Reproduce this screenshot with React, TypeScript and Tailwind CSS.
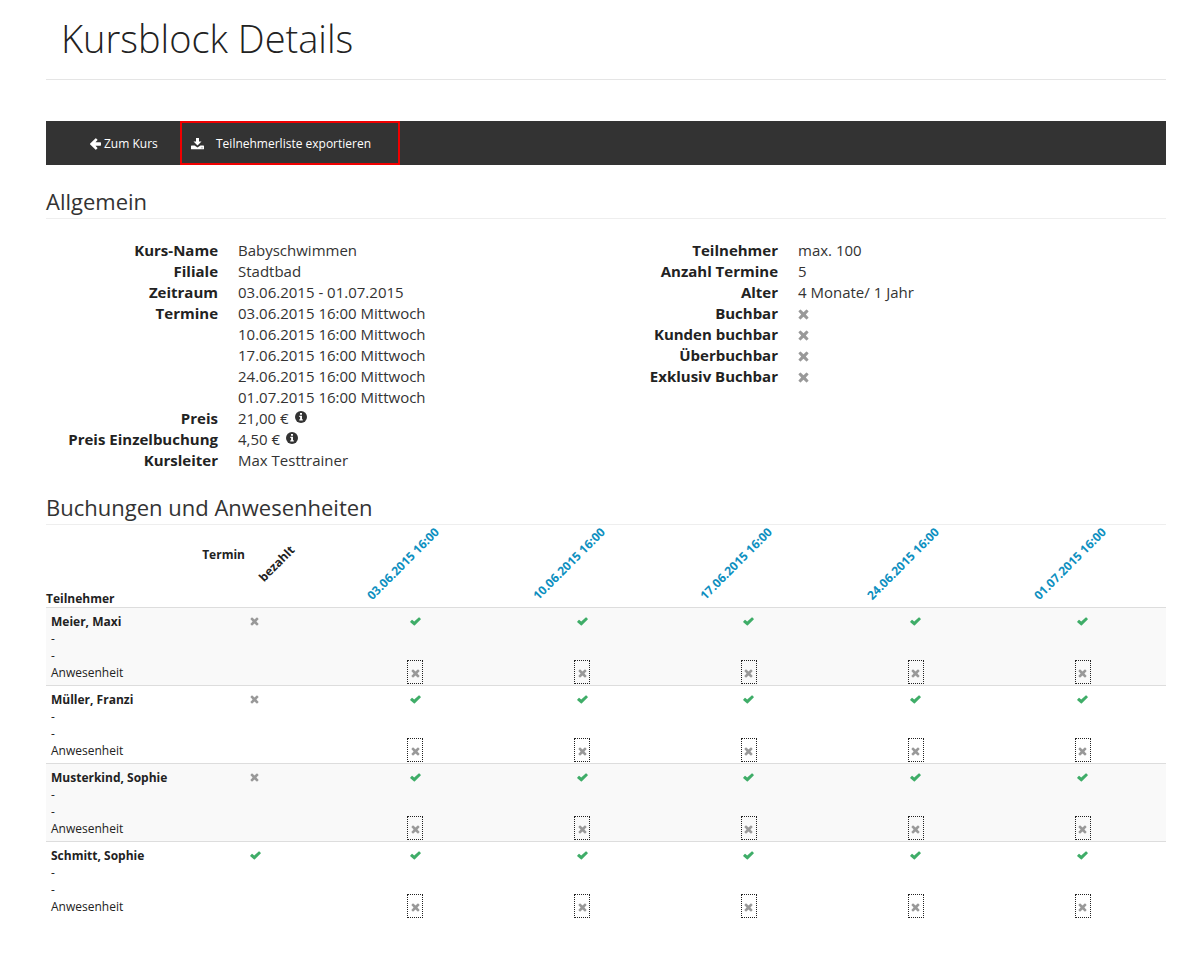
import type { ReactNode } from "react";

const dates = [
  "03.06.2015 16:00",
  "10.06.2015 16:00",
  "17.06.2015 16:00",
  "24.06.2015 16:00",
  "01.07.2015 16:00",
];

const participants = [
  { name: "Meier, Maxi", paid: false },
  { name: "Müller, Franzi", paid: false },
  { name: "Musterkind, Sophie", paid: false },
  { name: "Schmitt, Sophie", paid: true },
];

function CrossIcon({ className }: { className: string }) {
  return (
    <svg viewBox="0 0 10 10" className={className} aria-hidden>
      <path
        d="M2.6.6 5 2.9 7.4.6a.5.5 0 0 1 .7 0l1.3 1.3a.5.5 0 0 1 0 .7L7.1 5l2.3 2.4a.5.5 0 0 1 0 .7L8.1 9.4a.5.5 0 0 1-.7 0L5 7.1 2.6 9.4a.5.5 0 0 1-.7 0L.6 8.1a.5.5 0 0 1 0-.7L2.9 5 .6 2.6a.5.5 0 0 1 0-.7L1.9.6a.5.5 0 0 1 .7 0Z"
        fill="#999"
      />
    </svg>
  );
}

function CheckIcon() {
  return (
    <svg viewBox="0 0 11 9" className="h-[9px] w-[11px]" aria-hidden>
      <path
        d="M.3 4.5 1.7 3a.5.5 0 0 1 .7 0l1.8 1.6L8.7.4a.5.5 0 0 1 .7 0l1.3 1.3a.5.5 0 0 1 0 .7L4.9 8.2a.8.8 0 0 1-1.1 0L.3 5.2a.5.5 0 0 1 0-.7Z"
        fill="#3fad68"
      />
    </svg>
  );
}

function ArrowLeftIcon() {
  return (
    <svg viewBox="0 0 11 12" className="h-3 w-[11px]" aria-hidden>
      <path
        d="M6.2.4 7.3 1.5a.6.6 0 0 1 0 .8L5.5 4.300h4.900a.6.6 0 0 1 .6.6v2.200a.6.6 0 0 1-.6.6H5.500l1.800 2a.6.6 0 0 1 0 .8l-1.100 1.100a.6.6 0 0 1-.8 0L.2 6.400a.6.6 0 0 1 0-.8L5.400.4a.6.6 0 0 1 .8 0Z"
        fill="currentColor"
      />
    </svg>
  );
}

function DownloadIcon() {
  return (
    <svg viewBox="0 0 13 12" className="h-3 w-[13px]" aria-hidden>
      <path d="M5 0h3v3.6h2.5L6.5 7.6l-4-4H5Z" fill="currentColor" />
      <path
        d="M.6 7.5h3L6.5 9.6l2.9-2.1h3a.6.6 0 0 1 .6.6v2.6a.6.6 0 0 1-.6.6H.6a.6.6 0 0 1-.6-.6V8.1a.6.6 0 0 1 .6-.6Zm9.9 1.9v.8h1v-.8Z"
        fill="currentColor"
        fillRule="evenodd"
      />
    </svg>
  );
}

function InfoIcon() {
  return (
    <svg viewBox="0 0 12 12" className="h-3 w-3" aria-hidden>
      <circle cx="6" cy="6" r="6" fill="#333" />
      <path d="M5 2h2v1.7H5ZM4.3 4.7H7v3.6h.8v1.3H4.3V8.3h.8V6h-.8Z" fill="#fff" />
    </svg>
  );
}

function Price({ children }: { children: ReactNode }) {
  return (
    <span className="flex items-start gap-1.5">
      {children}
      <span className="pt-[3px]">
        <InfoIcon />
      </span>
    </span>
  );
}

function Row({ label, children }: { label: string; children: ReactNode }) {
  return (
    <div className="flex gap-5">
      <dt className="w-[172px] shrink-0 text-right font-bold">{label}</dt>
      <dd className="text-[#333]">{children}</dd>
    </div>
  );
}

function No() {
  return (
    <span className="flex h-[21px] items-center pt-px">
      <CrossIcon className="h-[11px] w-[11px]" />
    </span>
  );
}

function SectionTitle({ children }: { children: ReactNode }) {
  return (
    <h2 className="border-b border-[#eee] text-[22px] leading-[33px] text-[#333]">{children}</h2>
  );
}

export default function App() {
  return (
    <main className="min-h-screen bg-white pr-[34px] pb-10 pl-[46px] font-['Open_Sans',sans-serif] text-[#222]">
      <header className="border-b border-[#e5e5e5] px-[15px] pt-[11px] pb-[13px]">
        <h1 className="text-[38px] leading-[55px] font-light">Kursblock Details</h1>
      </header>

      <nav className="mt-[41px] flex h-11 bg-[#333] pl-[35px] text-xs text-white">
        <a href="#kurs" className="flex w-[99px] items-center gap-[3px] pt-px pl-[9px]">
          <ArrowLeftIcon />
          Zum Kurs
        </a>
        <a
          href="#export"
          className="flex w-[220px] items-center gap-3 border-2 border-[#f00000] pt-px pl-[9px]"
        >
          <DownloadIcon />
          Teilnehmerliste exportieren
        </a>
      </nav>

      <section className="pt-5">
        <SectionTitle>Allgemein</SectionTitle>
        <div className="grid grid-cols-2 pt-[21px] pb-5 text-[15px] leading-[21px]">
          <dl>
            <Row label="Kurs-Name">Babyschwimmen</Row>
            <Row label="Filiale">Stadtbad</Row>
            <Row label="Zeitraum">03.06.2015 - 01.07.2015</Row>
            <Row label="Termine">
              {dates.map((date) => (
                <div key={date}>{date} Mittwoch</div>
              ))}
            </Row>
            <Row label="Preis">
              <Price>21,00 €</Price>
            </Row>
            <Row label="Preis Einzelbuchung">
              <Price>4,50 €</Price>
            </Row>
            <Row label="Kursleiter">Max Testtrainer</Row>
          </dl>
          <dl>
            <Row label="Teilnehmer">max. 100</Row>
            <Row label="Anzahl Termine">5</Row>
            <Row label="Alter">4 Monate/ 1 Jahr</Row>
            <Row label="Buchbar"><No /></Row>
            <Row label="Kunden buchbar"><No /></Row>
            <Row label="Überbuchbar"><No /></Row>
            <Row label="Exklusiv Buchbar"><No /></Row>
          </dl>
        </div>
      </section>

      <section>
        <SectionTitle>Buchungen und Anwesenheiten</SectionTitle>
        <table className="w-full table-fixed border-separate border-spacing-0 text-xs leading-[17px]">
          <thead>
            <tr className="h-[82px]">
              <th className="w-[199px] p-0 align-bottom">
                <div className="flex h-[61px] flex-col justify-between">
                  <span className="text-right">Termin</span>
                  <span className="text-left">Teilnehmer</span>
                </div>
              </th>
              <th className="w-[87px] p-0 pb-1.5">
                <span className="block w-[63px] -rotate-45 text-center">bezahlt</span>
              </th>
              {dates.map((date) => (
                <th key={date} className="p-0 pb-1.5 text-center">
                  <a href="#termin" className="mr-[26px] inline-block -rotate-45 whitespace-nowrap text-[#0d8fc0]">
                    {date}
                  </a>
                </th>
              ))}
            </tr>
          </thead>
          <tbody>
            {participants.map((p) => (
              <tr key={p.name} className="odd:bg-[#f9f9f9]">
                <td className="border-t border-[#ddd] px-[5px] pt-[5px] pb-px align-top">
                  <div className="font-bold">{p.name}</div>
                  <div>-</div>
                  <div>-</div>
                  <div>Anwesenheit</div>
                </td>
                <td className="border-t border-[#ddd] px-[5px] pt-[5px] pb-px align-top">
                  <div className="flex h-[17px] items-center">
                    {p.paid ? <CheckIcon /> : <CrossIcon className="h-[9px] w-[9px]" />}
                  </div>
                </td>
                {dates.map((date) => (
                  <td key={date} className="border-t border-[#ddd] px-[5px] pt-[5px] pb-px align-top">
                    <div className="flex h-[71px] flex-col items-center justify-between">
                      <span className="flex h-[17px] items-center">
                        <CheckIcon />
                      </span>
                      <button
                        type="button"
                        aria-label={`Anwesenheit ${p.name} ${date}`}
                        className="flex h-6 w-4 items-center justify-center border border-dotted border-[#222] pt-0.5"
                      >
                        <CrossIcon className="h-[9px] w-[9px]" />
                      </button>
                    </div>
                  </td>
                ))}
              </tr>
            ))}
          </tbody>
        </table>
      </section>
    </main>
  );
}
